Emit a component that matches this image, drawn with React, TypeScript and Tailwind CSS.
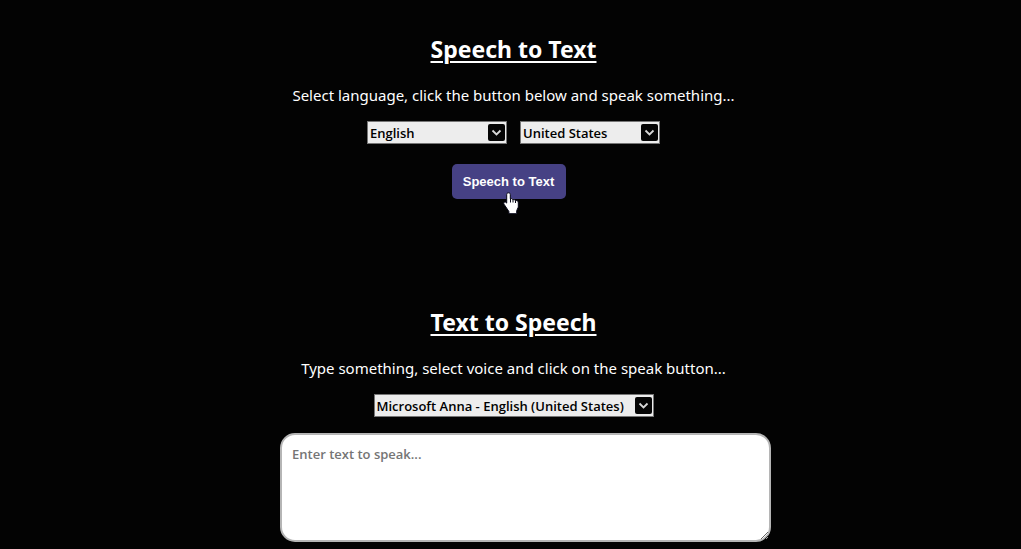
import type { ReactNode } from "react";

type PickerProps = { label: string; options: string[]; width: string };

function Picker({ label, options, width }: PickerProps) {
  return (
    <div className={`relative ${width}`}>
      <select
        aria-label={label}
        className="block h-[23px] w-full appearance-none border border-[#767676] bg-[#ededed] pl-0.5 pr-5 font-['Open_Sans',sans-serif] text-[13px] font-semibold leading-5 text-black"
      >
        {options.map((option) => (
          <option key={option}>{option}</option>
        ))}
      </select>
      <svg
        className="pointer-events-none absolute right-0.5 top-0.5"
        width="17"
        height="19"
        viewBox="0 0 17 19"
        fill="none"
        aria-hidden="true"
      >
        <rect x="0" y="1" width="17" height="17" rx="2" fill="#050505" />
        <path d="M4.500 7.500l4 4 4-4" stroke="#d8d8d8" strokeWidth="1.8" />
      </svg>
    </div>
  );
}

function Section({ title, hint, children }: { title: string; hint: string; children: ReactNode }) {
  return (
    <section className="flex w-full flex-col items-center">
      <h2 className="text-[23px] font-bold leading-8 underline decoration-2 underline-offset-3">{title}</h2>
      <p className="mt-[18px] text-[15px] leading-6">{hint}</p>
      {children}
    </section>
  );
}

function HandPointer() {
  return (
    <svg
      className="pointer-events-none absolute left-[51px] top-7"
      width="18"
      height="23"
      viewBox="0 0 18 23"
      aria-hidden="true"
    >
      <path
        d="M5.500.8c1.200 0 1.800.7 1.800 1.800v4.200c1.300-.5 2.200 0 2.600.9 1.200-.4 2.100 0 2.500.9 1.800-.3 2.900.5 2.900 2.300v4.200l-1.600 3.600v3H5.900v-2.200L1 12.200c-.8-1.200.3-2.600 1.700-2l1 .9V2.600C3.700 1.500 4.300.8 5.500.8Z"
        fill="#fff"
        stroke="#080818"
      />
      <path d="M7.500 6.500v4M10 7.500v3M12.500 8.500v2.500" stroke="#080818" />
    </svg>
  );
}

export default function App() {
  return (
    <main className="flex min-h-screen flex-col items-center bg-[#030303] pb-[7px] pl-1.5 pt-[33px] font-['Noto_Sans','Open_Sans',sans-serif] text-white">
      <Section title="Speech to Text" hint="Select language, click the button below and speak something...">
        <div className="mt-3.5 flex gap-[13px]">
          <Picker label="Language" options={["English"]} width="w-[140px]" />
          <Picker label="Region" options={["United States"]} width="w-[140px]" />
        </div>
        <div className="relative mr-2.5 mt-5">
          <button
            type="button"
            className="block h-[35px] w-[114px] cursor-pointer rounded-[5px] bg-[#464184] font-['Liberation_Sans',sans-serif] text-[13px] font-bold"
          >
            Speech to Text
          </button>
          <HandPointer />
        </div>
      </Section>
      <div className="h-[107px]" />
      <Section title="Text to Speech" hint="Type something, select voice and click on the speak button...">
        <div className="mt-3.5">
          <Picker
            label="Voice"
            options={["Microsoft Anna - English (United States)"]}
            width="w-[280px]"
          />
        </div>
        <textarea
          aria-label="Text to speak"
          placeholder="Enter text to speak..."
          className="ml-6 mt-4 block h-[109px] w-[491px] max-w-full rounded-[15px] border-2 border-[#b5b5b5] bg-white px-2.5 py-[9px] font-['Open_Sans',sans-serif] text-[13px] font-semibold leading-5 text-black placeholder:text-[#757575]"
        />
      </Section>
    </main>
  );
}
